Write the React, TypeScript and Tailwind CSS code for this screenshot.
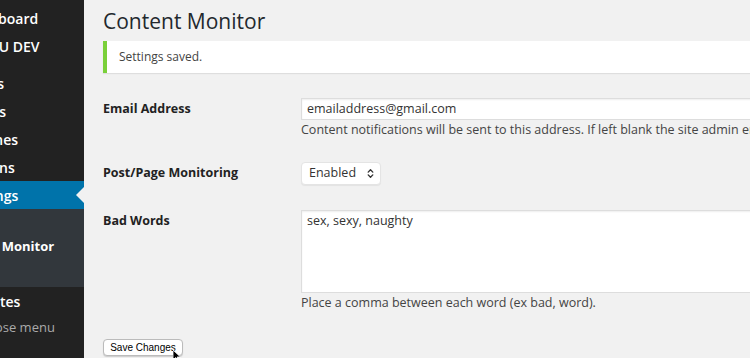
import { ChevronsUpDown } from 'lucide-react';

const font = { fontFamily: '"Open Sans", "Noto Sans", sans-serif' };

function MenuItem({ label, active, offset = '-ml-[32px]' }: { label: string; active?: boolean; offset?: string }) {
    return (
        <div className={`relative h-[28px] flex items-center whitespace-nowrap ${active ? 'bg-[#0073aa]' : ''}`}>
            <span className={`${offset} text-[14px] text-white font-semibold`}>{label}</span>
            {active && (
                <span className="absolute right-0 top-1/2 -translate-y-1/2 w-0 h-0 border-y-[8px] border-y-transparent border-r-[8px] border-r-[#f1f1f1]" />
            )}
        </div>
    );
}

export default function App() {
    return (
        <div className="w-[750px] h-[358px] overflow-hidden flex bg-[#f1f1f1] text-[#222]" style={font}>
            {/* Admin sidebar */}
            <aside className="w-[84px] shrink-0 bg-[#222] overflow-hidden flex flex-col pt-[4px]">
                <MenuItem label="Dashboard" offset="-ml-[36px]" />
                <MenuItem label="WPMU DEV" offset="-ml-[36px]" />
                <div className="h-[9px]" />
                <MenuItem label="Sites" offset="-ml-[28px]" />
                <MenuItem label="Users" />
                <MenuItem label="Themes" offset="-ml-[35px]" />
                <MenuItem label="Plugins" offset="-ml-[34px]" />
                <MenuItem label="Settings" active offset="-ml-[36px]" />
                <div className="bg-[#32373c] h-[78px] flex flex-col justify-center pb-[6px]">
                    <div className="whitespace-nowrap">
                        <span className="-ml-[54px] text-[13px] font-bold text-white">Content Monitor</span>
                    </div>
                </div>
                <MenuItem label="Updates" offset="-ml-[36px]" />
                <div className="h-[26px] flex items-center whitespace-nowrap">
                    <span className="-ml-[35px] text-[13px] text-[#aaa]">Collapse menu</span>
                </div>
            </aside>

            {/* Main content */}
            <main className="flex-1 pl-[19px] relative">
                <h1 className="text-[21px] font-normal leading-none pt-[11px] text-[#23282d]">Content Monitor</h1>

                <div className="mt-[9px] h-[32px] bg-white border-l-4 border-[#7ad03a] shadow-[0_1px_1px_rgba(0,0,0,0.08)] flex items-center pl-[12px]">
                    <p className="text-[12px] text-[#444]">Settings saved.</p>
                </div>

                <div className="mt-[25px] flex">
                    <div className="w-[198px] shrink-0 text-[12.5px] font-bold pt-[2px]">Email Address</div>
                    <div className="flex-1 whitespace-nowrap">
                        <div className="h-[22px] w-[500px] bg-white border border-[#ddd] shadow-[inset_0_1px_2px_rgba(0,0,0,0.07)] flex items-center px-[5px] text-[12.5px] text-[#333]">
                            emailaddress@gmail.com
                        </div>
                        <p className="text-[12.5px] text-[#444] mt-[1px]">
                            Content notifications will be sent to this address. If left blank the site admin email will be used.
                        </p>
                    </div>
                </div>

                <div className="mt-[22px] flex items-center">
                    <div className="w-[198px] shrink-0 text-[12.5px] font-bold">Post/Page Monitoring</div>
                    <div className="h-[23px] w-[80px] bg-white rounded-[4px] border border-[#e4e4e4] shadow-[0_1px_1px_rgba(0,0,0,0.06)] flex items-center justify-between pl-[7px] pr-[4px] text-[12.5px] text-[#333]">
                        Enabled
                        <ChevronsUpDown className="w-[11px] h-[11px] text-[#333]" strokeWidth={3} />
                    </div>
                </div>

                <div className="mt-[25px] flex">
                    <div className="w-[198px] shrink-0 text-[12.5px] font-bold pt-[2px]">Bad Words</div>
                    <div className="flex-1 whitespace-nowrap">
                        <div className="h-[83px] w-[500px] bg-white border border-[#ddd] shadow-[inset_0_1px_2px_rgba(0,0,0,0.07)] px-[5px] pt-[1px] text-[12.5px] text-[#333]">
                            sex, sexy, naughty
                        </div>
                        <p className="text-[12.5px] text-[#444] mt-[1px]">Place a comma between each word (ex bad, word).</p>
                    </div>
                </div>

                <button
                    className="absolute left-[19px] top-[339px] h-[17px] w-[80px] bg-white border border-[#bbb] rounded-[4px] text-[10px] text-black shadow-[0_1px_1px_rgba(0,0,0,0.15)]"
                    style={{ fontFamily: '"Liberation Sans", Arial, sans-serif' }}
                >
                    Save Changes
                </button>
                <svg className="absolute left-[89px] top-[350px]" width="8" height="12" viewBox="0 0 8 12">
                    <path d="M0 0 L0 10 L2.5 7.5 L4.5 11.5 L6 11 L4 7 L7.5 7 Z" fill="#000" stroke="#fff" strokeWidth="0.8" />
                </svg>
            </main>
        </div>
    );
}
